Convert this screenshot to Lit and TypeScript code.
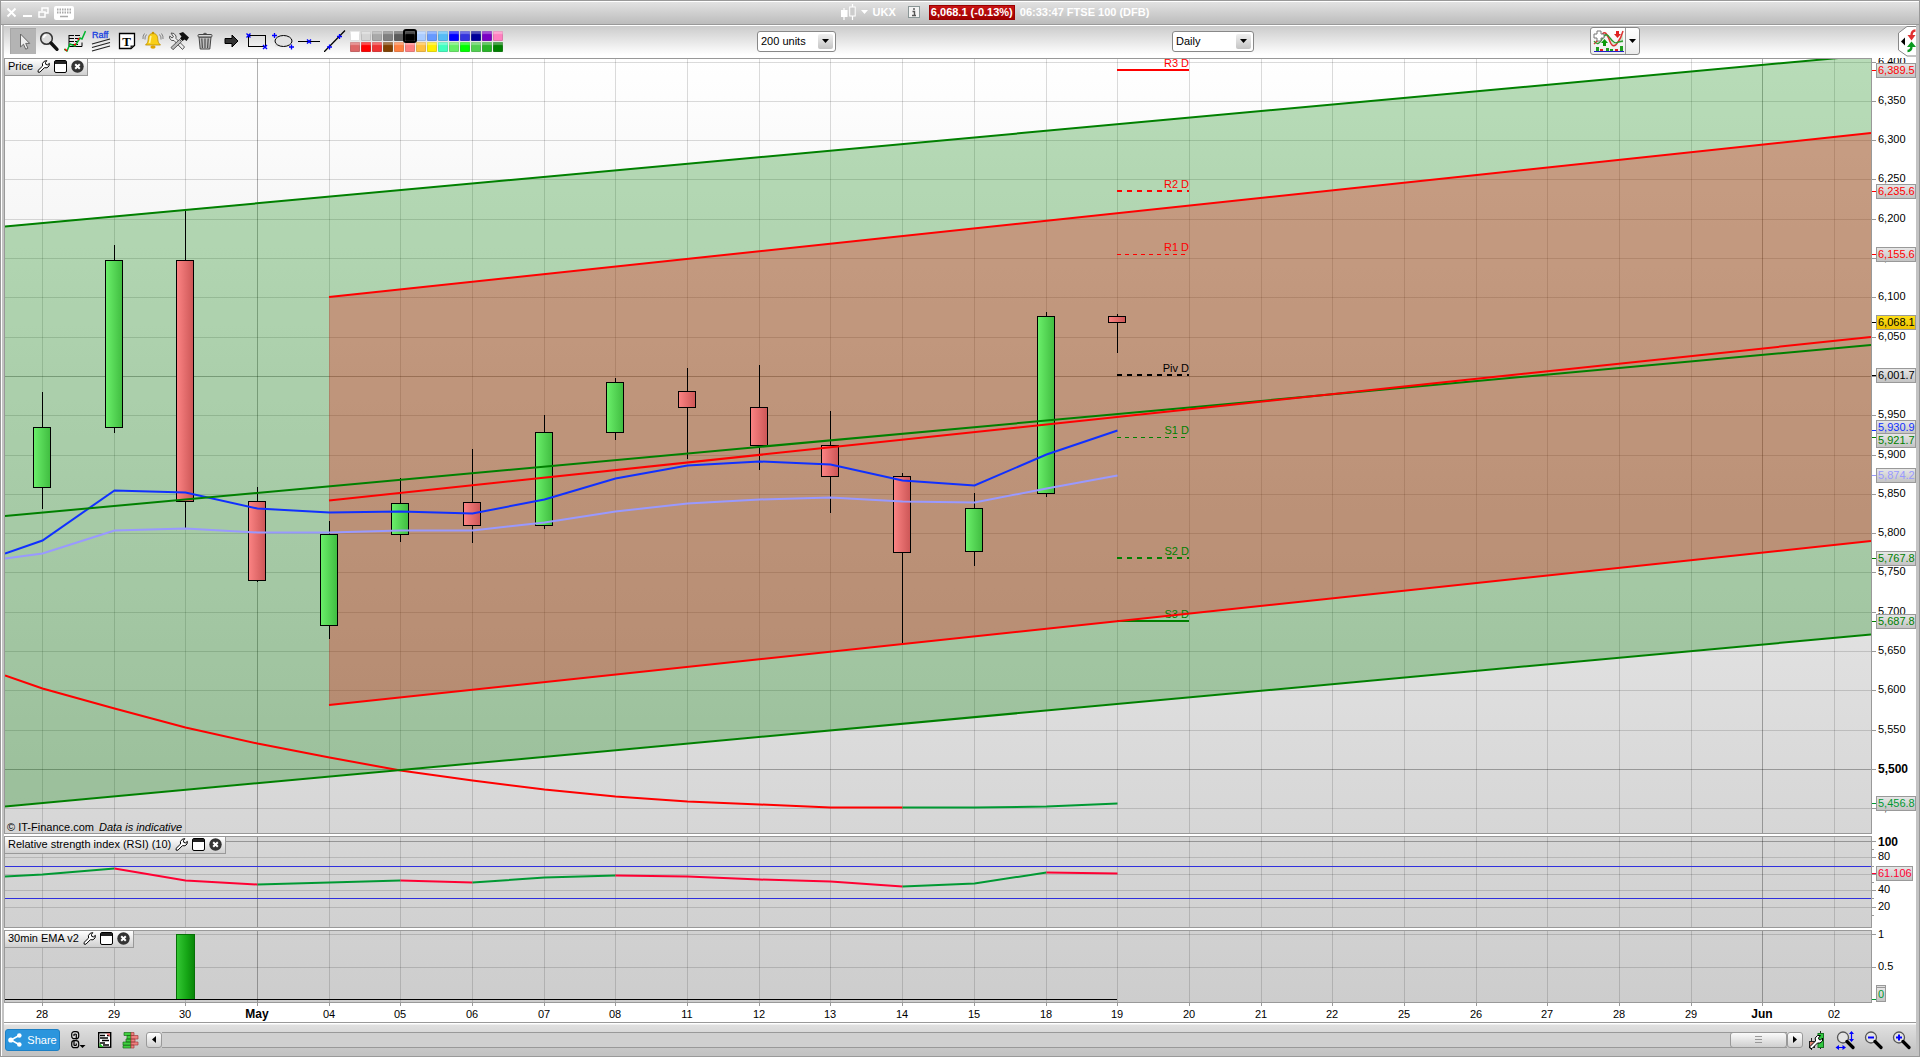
import { LitElement, html, css, svg, nothing } from "lit";
import { customElement, state } from "lit/decorators.js";

/* ---------- Shared data ---------- */

const DAYS = [
  "28", "29", "30", "May", "04", "05", "06", "07", "08", "11", "12", "13", "14",
  "15", "18", "19", "20", "21", "22", "25", "26", "27", "28", "29", "Jun", "02",
];
const isMonth = (d: string) => /[A-Z]/.test(d);

/* Drawing units: the plot spans x 5..1871; each day column is 71.68 units wide. */
const PLOT_LEFT = 5;
const PLOT_SPAN = 1866;
const AXIS_WIDTH = 45;
const colX = (i: number) => 42 + 71.68 * i;

/* open/close body and wick extents: [high, bodyTop, bodyBottom, low, rising] */
const CANDLES: [number, number, number, number, boolean][] = [
  [392, 427, 488, 509, true],
  [245, 260, 428, 433, true],
  [211, 260, 502, 528, false],
  [487, 501, 581, 582, false],
  [521, 534, 626, 639, true],
  [478, 503, 535, 542, true],
  [449, 502, 526, 543, false],
  [415, 432, 526, 529, true],
  [378, 382, 433, 440, true],
  [368, 391, 408, 459, false],
  [365, 407, 446, 470, false],
  [411, 445, 477, 513, false],
  [473, 476, 553, 643, false],
  [493, 508, 552, 566, true],
  [312, 316, 494, 497, true],
  [314, 316, 323, 353, false],
];

/* First value sits on the left edge of the plot, the rest on day columns. */
const FAST_MA = [554, 541, 491, 493, 509, 513, 512, 514, 500, 479, 466, 462, 465, 481, 486, 455, 431];
const SLOW_MA = [559, 554, 531, 529, 533, 533, 531, 531, 523, 512, 504, 500, 498, 502, 503, 489, 476];
const LONG_MA = [676, 689, 709, 728, 744, 758, 771, 781, 790, 797, 802, 805, 808, 808, 808, 807, 804];
const RSI = [877, 875, 869, 881, 885, 883, 881, 883, 878, 876, 877, 880, 882, 887, 884, 873, 874];

type Tag = { text: string; at: number; box?: number; color: string; hot?: boolean };
const PRICE_TAGS: Tag[] = [
  { text: "6,389.5", at: 70, color: "#ff0000" },
  { text: "6,235.6", at: 191, color: "#ff0000" },
  { text: "6,155.6", at: 254, color: "#ff0000" },
  { text: "6,068.1", at: 322, color: "#000000", hot: true },
  { text: "6,001.7", at: 375, color: "#000000" },
  { text: "5,930.9", at: 430, box: 427, color: "#1030ff" },
  { text: "5,921.7", at: 437, box: 440, color: "#008000" },
  { text: "5,874.2", at: 475, color: "#9999ff" },
  { text: "5,767.8", at: 558, color: "#008000" },
  { text: "5,687.8", at: 621, color: "#008000" },
  { text: "5,456.8", at: 803, color: "#009933" },
];

const PIVOTS = [
  { text: "R3 D", at: 70, color: "#ff0000", width: 2, dash: "" },
  { text: "R2 D", at: 191, color: "#ff0000", width: 2, dash: "5 5" },
  { text: "R1 D", at: 254, color: "#ff0000", width: 1, dash: "4 4" },
  { text: "Piv D", at: 375, color: "#000000", width: 2, dash: "5 5" },
  { text: "S1 D", at: 437, color: "#008000", width: 1, dash: "4 4" },
  { text: "S2 D", at: 558, color: "#008000", width: 2, dash: "5 5" },
  { text: "S3 D", at: 621, color: "#008000", width: 2, dash: "" },
];

/* ---------- Base class for plot panels ---------- */

const panelStyles = css`
  :host {
    display: block;
    position: relative;
    min-height: 0;
    overflow: hidden;
    background: #fff;
    font: 11px/14px "Liberation Sans", Arial, sans-serif;
    color: #000;
  }
  .sheet { display: block; width: 100%; height: 100%; }
  .crisp { shape-rendering: crispEdges; }
  .label { font-size: 11px; }
  .label-major { font-size: 12px; font-weight: bold; }
  .frame { fill: none; stroke: #999; }
  .grid { stroke: #000; stroke-opacity: 0.14; }
  .grid-major { stroke: #000; stroke-opacity: 0.3; }
  .tick { stroke: #999; }
  .head {
    position: absolute;
    left: 1px;
    top: 1px;
    display: flex;
    align-items: center;
    gap: 4px;
    height: 14px;
    padding: 0 3px 2px;
    border: solid #999;
    border-width: 0 1px 1px 0;
    background: linear-gradient(#fff, #cfcfcf);
  }
  .head button { display: block; width: 13px; height: 13px; padding: 0; border: 0; background: none; }
  .head svg { display: block; }
`;

abstract class PlotPanel extends LitElement {
  static styles = panelStyles;
  @state() protected w = 1912;
  @state() protected h: number;
  protected abstract heading: string;
  private observer?: ResizeObserver;

  constructor(protected top: number, protected span: number) {
    super();
    this.h = span;
  }

  connectedCallback() {
    super.connectedCallback();
    this.observer = new ResizeObserver(([e]) => {
      this.w = Math.round(e.contentRect.width);
      this.h = Math.round(e.contentRect.height);
    });
    this.observer.observe(this);
  }

  disconnectedCallback() {
    this.observer?.disconnect();
    super.disconnectedCallback();
  }

  protected X(v: number) {
    return 1 + ((v - PLOT_LEFT) * (this.w - AXIS_WIDTH - 1)) / PLOT_SPAN;
  }
  protected Y(v: number) {
    return 1 + ((v - this.top - 1) * (this.h - 2)) / (this.span - 2);
  }
  protected px(i: number) {
    return Math.round(this.X(Math.round(colX(i))));
  }
  protected py(v: number) {
    return Math.round(this.Y(v));
  }
  protected seriesPoint(values: number[], k: number): string {
    const x = k === 0 ? 1 : this.px(k - 1) + 0.5;
    return `${x},${this.Y(values[k]) - 0.5}`;
  }
  protected series(values: number[], from = 0, to = values.length - 1) {
    const out: string[] = [];
    for (let k = from; k <= to; k++) out.push(this.seriesPoint(values, k));
    return out.join(" ");
  }

  protected background(from: string, to: string) {
    const right = this.w - AXIS_WIDTH;
    return svg`
      <defs>
        <linearGradient id="back" x1="0" y1="0" x2="0" y2="1"><stop offset="0" stop-color=${from}/><stop offset="1" stop-color=${to}/></linearGradient>
        <linearGradient id="tag" x1="0" y1="0" x2="0" y2="1"><stop offset="0" stop-color="#e8e8e8"/><stop offset="1" stop-color="#c2c2c2"/></linearGradient>
        <linearGradient id="hot" x1="0" y1="0" x2="0" y2="1"><stop offset="0" stop-color="#ffe018"/><stop offset="1" stop-color="#edc000"/></linearGradient>
        <clipPath id="plot"><rect x="1" y="1" width=${right - 1} height=${this.h - 2}/></clipPath>
      </defs>
      <rect width=${right} height=${this.h} fill="url(#back)"/>`;
  }

  protected columns() {
    return svg`<g class="crisp">${DAYS.map((d, i) => {
      const x = this.px(i) + 0.5;
      return svg`<line class=${isMonth(d) ? "grid-major" : "grid"} x1=${x} x2=${x} y1="1" y2=${this.h - 1}/>`;
    })}</g>`;
  }

  protected row(v: number, major = false) {
    const y = this.py(v) + 0.5;
    const r = this.w - AXIS_WIDTH;
    return svg`
      <line class=${major ? "grid-major crisp" : "grid crisp"} x1="1" x2=${r} y1=${y} y2=${y}/>
      <line class="tick crisp" x1=${r + 1} x2=${r + 5} y1=${y} y2=${y}/>`;
  }

  protected axisText(text: string, v: number, major = false) {
    return svg`<text class=${major ? "label-major" : "label"} x=${this.w - 38} y=${this.py(v) + (major ? 4 : 3)}>${text}</text>`;
  }

  protected tag(t: Tag, width = 39) {
    const y = this.py(t.at);
    const c = this.py(t.box ?? t.at);
    const x = this.w - 40;
    return svg`
      <line class="crisp" x1=${x - 4} x2=${x} y1=${y + 0.5} y2=${y + 0.5} stroke=${t.color}/>
      <rect class="crisp" x=${x + 0.5} y=${c - 6.5} width=${width} height="14" fill=${t.hot ? "url(#hot)" : "url(#tag)"} stroke="#999"/>
      <text class="label" x=${x + 2} y=${c + 4} fill=${t.color}>${t.text}</text>`;
  }

  protected frame() {
    return svg`<rect class="frame crisp" x="0.5" y="0.5" width=${this.w - AXIS_WIDTH} height=${this.h - 1}/>`;
  }

  protected abstract drawing(): unknown;

  render() {
    return html`
      <svg class="sheet" role="img" aria-label=${this.heading}>${this.drawing()}</svg>
      <div class="head">
        <span>${this.heading}</span>
        <button aria-label="Settings">
          <svg width="13" height="13" viewBox="0 0 13 13">
            <path d="M1 10.500 5.600 6 5.400 3.600 7.200 1.300 9.800.6 8.400 2.600 8.800 4.400 10.400 4.900 12.400 3.400 12 6 10 7.800 7.400 7.700 2.900 12.200 1.200 12.200Z" fill="#fff" stroke="#000"/>
          </svg>
        </button>
        <button aria-label="Window">
          <svg width="13" height="13" viewBox="0 0 13 13">
            <rect x=".5" y=".5" width="12" height="12" rx="1.5" fill="#fff" stroke="#000"/>
            <rect x="1" y="1" width="11" height="3" fill="#222"/>
          </svg>
        </button>
        <button aria-label="Close">
          <svg width="13" height="13" viewBox="0 0 13 13">
            <circle cx="6.5" cy="6.5" r="6.2" fill="#333"/>
            <path d="M4.200 4.200l4.600 4.600M8.800 4.200l-4.600 4.600" stroke="#fff" stroke-width="2"/>
          </svg>
        </button>
      </div>`;
  }
}

/* ---------- Price ---------- */

@customElement("price-panel")
export class PricePanel extends PlotPanel {
  protected heading = "Price";
  constructor() { super(58, 776); }

  protected drawing() {
    const levels = Array.from({ length: 20 }, (_, i) => ({
      price: 6400 - 50 * i,
      at: Math.floor(62.11 + 39.29 * i),
    }));
    const l = 1;
    const r = this.w - AXIS_WIDTH;
    const s = this.X(329);
    const Y = (v: number) => this.Y(v);
    const p0 = this.px(15);
    const p1 = this.px(16);
    return svg`
      ${this.background("#ffffff", "#d6d6d6")}
      <defs>
        <linearGradient id="up"><stop offset="0" stop-color="#6bf06b"/><stop offset="1" stop-color="#40bc40"/></linearGradient>
        <linearGradient id="down"><stop offset="0" stop-color="#fc8484"/><stop offset="1" stop-color="#cc5656"/></linearGradient>
      </defs>
      ${this.columns()}
      ${levels.map((v) => this.row(v.at, v.price % 500 === 0))}
      <g clip-path="url(#plot)">
        <polygon points="${l},${Y(226)} ${r},${Y(55)} ${r},${Y(634)} ${l},${Y(806)}" fill="#008000" fill-opacity="0.28"/>
        <polygon points="${s},${Y(297)} ${r},${Y(133)} ${r},${Y(541)} ${s},${Y(705)}" fill="#f40000" fill-opacity="0.28"/>
        ${CANDLES.map(([hi, top, bottom, lo, rising], i) => {
          const x = this.px(i);
          const y0 = this.py(top);
          const y1 = this.py(bottom);
          return svg`<g class="crisp">
            <line x1=${x + 0.5} x2=${x + 0.5} y1=${this.py(hi)} y2=${this.py(lo)} stroke="#000"/>
            <rect x=${x - 8.5} y=${y0 + 0.5} width="17" height=${Math.max(1, y1 - y0 - 1)} fill=${rising ? "url(#up)" : "url(#down)"} stroke="#000"/>
          </g>`;
        })}
        ${PIVOTS.map((p) => {
          const y = this.py(p.at);
          return svg`
            <line class="crisp" x1=${p0} x2=${p1} y1=${p.width === 1 ? y + 0.5 : y} y2=${p.width === 1 ? y + 0.5 : y}
              stroke=${p.color} stroke-width=${p.width} stroke-dasharray=${p.dash || nothing}/>
            <text class="label" x=${p1} y=${y - 3} text-anchor="end" fill=${p.color}>${p.text}</text>`;
        })}
        <g fill="none" stroke-width="2">
          <polyline points=${this.series(LONG_MA, 0, 13)} stroke="#ff0000"/>
          <polyline points=${this.series(LONG_MA, 13)} stroke="#009933"/>
          <polyline points=${this.series(FAST_MA)} stroke="#1030ff"/>
          <polyline points=${this.series(SLOW_MA)} stroke="#9999ff"/>
          <g stroke="#008000">
            <line x1=${l} y1=${Y(226.5)} x2=${r} y2=${Y(55)}/>
            <line x1=${l} y1=${Y(516)} x2=${r} y2=${Y(345)}/>
            <line x1=${l} y1=${Y(806.5)} x2=${r} y2=${Y(634.5)}/>
          </g>
          <g stroke="#ff0000">
            <line x1=${s} y1=${Y(297)} x2=${r} y2=${Y(133)}/>
            <line x1=${s} y1=${Y(500.5)} x2=${r} y2=${Y(337)}/>
            <line x1=${s} y1=${Y(705)} x2=${r} y2=${Y(541)}/>
          </g>
        </g>
      </g>
      <text class="label" x="3" y=${this.h - 3}>© IT-Finance.com<tspan dx="5" font-style="italic">Data is indicative</tspan></text>
      ${this.frame()}
      ${levels.filter((v) => v.price !== 6000).map((v) => this.axisText(v.price.toLocaleString("en-US"), v.at, v.price % 500 === 0))}
      ${PRICE_TAGS.map((t) => this.tag(t))}`;
  }
}

/* ---------- RSI ---------- */

@customElement("rsi-panel")
export class RsiPanel extends PlotPanel {
  protected heading = "Relative strength index (RSI) (10)";
  constructor() { super(836, 92); }

  protected drawing() {
    const r = this.w - AXIS_WIDTH;
    const runs: [number, number, boolean][] = [
      [0, 2, true], [2, 4, false], [4, 6, true], [6, 7, false],
      [7, 9, true], [9, 13, false], [13, 15, true], [15, 16, false],
    ];
    return svg`
      ${this.background("#d6d6d6", "#d1d1d1")}
      ${this.columns()}
      ${[857, 874, 890, 907].map((v) => this.row(v))}
      ${this.row(841, true)}
      <g class="crisp">
        ${[849, 866, 882, 898, 915].map((v) => svg`<line class="tick" x1=${r + 1} x2=${r + 3} y1=${this.py(v) + 0.5} y2=${this.py(v) + 0.5}/>`)}
        ${[866, 898].map((v) => svg`<line x1="1" x2=${r} y1=${this.py(v) + 0.5} y2=${this.py(v) + 0.5} stroke="#3030dd"/>`)}
      </g>
      <g fill="none" stroke-width="2" clip-path="url(#plot)">
        ${runs.map(([a, b, up]) => svg`<polyline points=${this.series(RSI, a, b)} stroke=${up ? "#009933" : "#ff0033"}/>`)}
      </g>
      ${this.frame()}
      ${this.axisText("100", 842, true)}
      ${this.axisText("80", 857)}
      ${this.axisText("40", 890)}
      ${this.axisText("20", 907)}
      ${this.tag({ text: "61.106", at: 873, color: "#ff0033" }, 36)}`;
  }
}

/* ---------- EMA signal ---------- */

@customElement("ema-panel")
export class EmaPanel extends PlotPanel {
  protected heading = "30min EMA v2";
  constructor() { super(930, 73); }

  protected drawing() {
    const x = this.px(2);
    const top = this.py(934);
    const zero = this.py(999);
    const tagX = this.w - 40;
    return svg`
      ${this.background("#d1d1d1", "#cdcdcd")}
      <defs><linearGradient id="bar"><stop offset="0" stop-color="#36c836"/><stop offset="0.55" stop-color="#17a817"/><stop offset="1" stop-color="#088508"/></linearGradient></defs>
      ${this.columns()}
      ${this.row(934)}
      ${this.row(967)}
      <g class="crisp">
        <rect x=${x - 8.5} y=${top + 0.5} width="18" height=${zero - top} fill="url(#bar)" stroke="#067006"/>
        <line x1="1" x2=${this.px(15)} y1=${zero + 0.5} y2=${zero + 0.5} stroke="#000"/>
      </g>
      ${this.frame()}
      ${this.axisText("1", 935)}
      ${this.axisText("0.5", 967)}
      <g class="crisp">
        <line x1=${tagX - 4} x2=${tagX} y1=${zero + 0.5} y2=${zero + 0.5} stroke="#009933"/>
        <rect x=${tagX + 0.5} y=${zero - 13.5} width="9" height="15" fill="#e0e0e0" stroke="#999"/>
        <rect x=${tagX + 0.5} y=${zero - 11.5} width="9" height="14" fill="url(#tag)" stroke="#999"/>
      </g>
      <text class="label" x=${tagX + 2} y=${zero - 1} fill="#009933">0</text>`;
  }
}

/* ---------- Date axis ---------- */

@customElement("date-axis")
export class DateAxis extends PlotPanel {
  protected heading = "Dates";
  constructor() { super(1003, 19); }
  protected drawing() { return nothing; }
  render() {
    return html`<svg class="sheet" role="img" aria-label="Dates">${DAYS.map((d, i) => {
      const x = this.px(i);
      return svg`
        <line class="tick crisp" x1=${x + 0.5} x2=${x + 0.5} y1="0" y2="3"/>
        <text class=${isMonth(d) ? "label-major" : "label"} x=${x} y="15" text-anchor="middle">${d}</text>`;
    })}</svg>`;
  }
}

/* ---------- Icons ---------- */

const icon = (w: number, h: number, body: unknown) =>
  html`<svg width=${w} height=${h} viewBox="0 0 ${w} ${h}" aria-hidden="true">${body}</svg>`;

const lens = (x: number, y: number, sign: unknown = nothing) => svg`
  <circle cx=${x} cy=${y} r="5.5" fill="#e4e4e4" stroke="#555" stroke-width="1.3"/>
  ${sign}
  <path d="M${x + 4} ${y + 4}l6 6" stroke="#000" stroke-width="3.2" stroke-linecap="round"/>`;

const cross = (x: number, y: number) =>
  svg`<path d="M${x - 2} ${y - 2}l4 4m0-4l-4 4" stroke="#00f" stroke-width="1.4" fill="none"/>`;

const TOOLS: { name: string; art: unknown }[] = [
  { name: "Pointer", art: icon(22, 22, svg`<path d="M7.500 3v13l3-2.800 2.200 5 2.200-1-2.200-4.800h4z" fill="#eee" stroke="#666"/>`) },
  {
    name: "Zoom",
    art: icon(22, 22, svg`
      <circle cx="8.5" cy="8.5" r="5.8" fill="#dcdcdc" stroke="#333" stroke-width="1.5"/>
      <path d="M5.500 8a3.400 3.400 0 0 1 3-3" stroke="#fff" stroke-width="1.5" fill="none"/>
      <path d="M13 13l6 6.300" stroke="#111" stroke-width="3.4" stroke-linecap="round"/>`),
  },
  {
    name: "Indicator report",
    art: icon(22, 22, svg`
      <path d="M5 5.500h12M5 8.500h12M5 11.500h9M5 14.500h9" stroke="#000" stroke-dasharray="5 1"/>
      <path d="M5 5v11.500h13v-4" fill="none" stroke="#000"/>
      <path d="M0 19l3 2 3-7 5 2 5-8 2 1 3.500-8" fill="none" stroke="#00b52c" stroke-width="1.5"/>
      <path d="M1 19l2 2M10 15l2-1M14 10l1-2" stroke="#f00" stroke-width="1.5"/>`),
  },
  {
    name: "Raff channel",
    art: icon(22, 22, svg`
      <text x="2" y="8" font-family="Liberation Sans, Arial, sans-serif" font-size="9" fill="#1540e0" stroke="#1540e0" stroke-width=".3">Raff</text>
      <path d="M2 14l18-5M2 17.500l18-5M2 21l18-5" stroke="#222" stroke-width="1.2"/>`),
  },
  {
    name: "Text",
    art: icon(22, 22, svg`
      <path d="M3.500 3.500h15v12l-3.500 3h-11.500z" fill="#fff" stroke="#000" stroke-width="1.3"/>
      <path d="M18 15.500h-3.500v3z" fill="#222"/>
      <text x="10.5" y="15.5" text-anchor="middle" font-family="Liberation Serif, serif" font-weight="bold" font-size="13">T</text>`),
  },
  {
    name: "Alert",
    art: icon(22, 22, svg`
      <path d="M11 3.500c-4 0-4.600 3-4.800 6-.2 2.500-1 4-2.700 5.500h15c-1.700-1.500-2.500-3-2.700-5.500-.2-3-.8-6-4.800-6z" fill="#f9cf17" stroke="#b98a00" stroke-width=".8"/>
      <path d="M9 6c-.9 2-.8 5-1.500 7" stroke="#fff3a0" stroke-width="1.6" fill="none"/>
      <ellipse cx="11" cy="17" rx="2.6" ry="1.8" fill="#e0a400"/><circle cx="11" cy="3" r="1.3" fill="#c99500"/>
      <path d="M4.500 4.500q-2 2.200-1.500 5M2.500 3.500q-2 2.500-1.500 5.500M17.500 4.500q2 2.200 1.500 5M19.500 3.500q2 2.500 1.500 5.500" stroke="#777" fill="none" stroke-width=".9"/>`),
  },
  {
    name: "Tools",
    art: icon(22, 22, svg`
      <path d="M3 3l3 .5 2 2.500v2.500l8.500 8.500-2 2.500-8.500-9h-2.500l-2-2.500.3-2 2.200 2 1.500-1.200z" fill="#eee" stroke="#555"/>
      <path d="M11.500 9.500l-8.500 8 2 2.200 8.500-8z" fill="#bbb" stroke="#555"/>
      <path d="M11 3.500l4-1.500 6 5.500-2.500 3.500-2-1.500-2 1.500-2.500-2.500 1.500-2z" fill="#111"/>`),
  },
  {
    name: "Delete",
    art: icon(22, 22, svg`
      <path d="M5 7h12l-1.200 12h-9.600z" fill="#bdbdbd" stroke="#444"/>
      <path d="M7.800 8.500l.6 9.500M11 8.500v9.500M14.200 8.500l-.6 9.500" stroke="#444" stroke-width="1.1"/>
      <rect x="4" y="4.5" width="14" height="2.5" rx="1" fill="#d8d8d8" stroke="#444"/>
      <path d="M9 4.300q2-2.500 4 0" fill="none" stroke="#444"/>`),
  },
  { name: "Arrow", art: icon(22, 22, svg`<path d="M5 8.500h7v-3.500l6 6-6 6v-3.500h-7z" fill="#333" stroke="#000"/>`) },
  {
    name: "Rectangle",
    art: icon(22, 22, svg`<rect x="2.5" y="5.5" width="17" height="11" fill="none" stroke="#000"/>${cross(2.5, 5.5)}${cross(19, 17)}`),
  },
  {
    name: "Ellipse",
    art: icon(22, 22, svg`
      <rect x="3" y="5.5" width="17" height="11" fill="#e2e2e2"/>
      <ellipse cx="11.5" cy="11" rx="8.5" ry="5.5" fill="none" stroke="#000"/>
      <path d="M0 5.500h5M2.500 3v5M17 17h5M19.500 14.500v5" stroke="#00f" stroke-width="1.3"/>`),
  },
  { name: "Horizontal line", art: icon(22, 22, svg`<path d="M0 11.500h22" stroke="#000"/>${cross(11, 11.5)}`) },
  {
    name: "Line",
    art: icon(22, 22, svg`<path d="M0 22L21 .5" stroke="#000" stroke-width="1.3"/>
      <path d="M3 17h5M5.500 14.500v5M13 6.500h5M15.500 4v5" stroke="#00f" stroke-width="1.3"/>`),
  },
];

const SWATCHES = [
  "#ffffff", "#d4d4d4", "#a9a9a9", "#808080", "#5c5c5c", "#000000", "#aaccff", "#6699ff", "#55bbf5", "#0000ff", "#3333dd", "#000099", "#7a00c4", "#ff80c0",
  "#dd6666", "#ff0000", "#ee3333", "#804000", "#ff8040", "#ff8080", "#ffc040", "#ffee00", "#40ffc0", "#66ee66", "#00ff00", "#50d050", "#28b428", "#008000",
];

/* ---------- Application window ---------- */

@customElement("app-root")
export class AppRoot extends LitElement {
  static styles = css`
    :host {
      display: block;
      height: 100vh;
      font: 11px/14px "Liberation Sans", Arial, sans-serif;
      color: #000;
    }
    * { box-sizing: border-box; }
    button, select, input { font: inherit; color: inherit; margin: 0; }
    button { padding: 0; border: 0; background: none; display: flex; align-items: center; justify-content: center; }
    svg { display: block; flex: none; }
    .window { height: 100%; display: flex; flex-direction: column; border: 1px solid #999; background: #c3c3c3; }
    .title {
      height: 24px;
      flex: none;
      display: flex;
      align-items: center;
      padding: 0 3px 1px 5px;
      border-top: 1px solid #fff;
      border-bottom: 1px solid #999;
      background: linear-gradient(#e2e2e2, #bcbcbc);
      color: #fff;
      font-weight: bold;
    }
    .controls { display: flex; align-items: center; gap: 5px; }
    .instrument { display: flex; align-items: center; margin: 0 auto; padding-bottom: 1px; }
    .symbol { display: flex; align-items: center; gap: 5px; color: #fff; font-weight: bold; }
    .info { margin: 0 9px 0 12px; }
    .quote { padding: 0 1px; border: 1px solid #900; background: linear-gradient(#c81414, #a00000); line-height: 13px; white-space: nowrap; }
    .clock { margin-left: 5px; white-space: nowrap; }
    .body { flex: 1; min-height: 0; display: flex; flex-direction: column; padding: 0 3px 3px 2px; border-left: 1px solid #fff; }
    .toolbar {
      height: 33px;
      flex: none;
      display: flex;
      align-items: center;
      border-top: 1px solid #fff;
      padding: 0 0 2px 6px;
      background: linear-gradient(#cbcbcb, #fff 90%);
    }
    .tool { width: 26px; height: 26px; flex: none; }
    .tool-on { background: #b4b4b4; border: solid #a6a6a6; border-width: 1px 0 0 1px; }
    .swatches { display: grid; grid-template-columns: repeat(14, 10px); gap: 1px; margin-left: 2px; }
    .swatch { width: 10px; height: 10px; border-radius: 1px; box-shadow: inset 0 3px 1px rgba(255, 255, 255, 0.3), inset 0 0 0 1px rgba(90, 90, 90, 0.2); }
    .swatch-on { outline: 2px solid #000; position: relative; z-index: 1; }
    .space-start { flex: 254 0 0; }
    .space-inner { flex: 336 0 0; }
    .space-end { flex: 258 0 0; }
    .picker { display: grid; flex: none; }
    .picker > * { grid-area: 1 / 1; }
    .picker select {
      appearance: none;
      height: 21px;
      padding: 0 22px 0 3px;
      border: 1px solid #888;
      border-radius: 3px;
      background: #fff;
    }
    .picker-units { width: 79px; }
    .picker-period { width: 82px; }
    .knob {
      justify-self: end;
      align-self: center;
      width: 15px;
      height: 15px;
      margin-right: 3px;
      border-radius: 2px;
      background: linear-gradient(#f0f0f0, #c4c4c4);
      pointer-events: none;
      display: grid;
      place-items: center;
    }
    .split { display: flex; height: 28px; border: 1px solid #888; border-radius: 3px; background: linear-gradient(#fff, #ececec); }
    .split-main { width: 35px; border-right: 1px solid #999; }
    .split-more { width: 13px; }
    .flap { width: 18px; height: 31px; flex: none; }
    .charts { flex: 1; min-height: 0; display: flex; flex-direction: column; background: #fff; }
    price-panel { flex: 776 0 0; margin-bottom: 2px; }
    rsi-panel { flex: 92 0 0; margin-bottom: 2px; }
    ema-panel { flex: 73 0 0; }
    date-axis { flex: none; height: 19px; }
    .bottom {
      height: 31px;
      flex: none;
      display: flex;
      align-items: center;
      border-top: 1px solid #999;
      padding: 3px 5px 0 1px;
      background: linear-gradient(#fff 1px, #e0e0e0 2px, #c3c3c3);
    }
    .share { width: 55px; height: 22px; gap: 5px; border: 1px solid #1c7fc4; border-radius: 3px; background: #2b95dd; color: #fff; }
    .bottom-tools { display: flex; gap: 9px; margin: 0 7px 0 10px; }
    .bottom-tool { width: 17px; height: 18px; }
    .step { width: 16px; height: 16px; border: 1px solid #999; border-radius: 3px; background: linear-gradient(#fff, #d0d0d0); }
    .scroll {
      appearance: none;
      flex: 1;
      min-width: 0;
      height: 16px;
      border: solid #999;
      border-width: 1px 0;
      background: #d0d0d0;
    }
    .scroll::-webkit-slider-thumb {
      appearance: none;
      width: 57px;
      height: 16px;
      border: 1px solid #999;
      border-radius: 3px;
      background:
        repeating-linear-gradient(#999 0 1px, transparent 1px 3px) center / 7px 7px no-repeat,
        linear-gradient(#fafafa, #cfcfcf);
    }
    .views { display: flex; gap: 8px; margin-left: 4px; }
    .view { width: 20px; height: 20px; }
  `;

  private picker(id: string, label: string, options: string[]) {
    return html`
      <div class="picker picker-${id}">
        <select aria-label=${label}>${options.map((o) => html`<option>${o}</option>`)}</select>
        <span class="knob">${icon(7, 4, svg`<path d="M0 0h7L3.500 4z"/>`)}</span>
      </div>`;
  }

  render() {
    return html`
      <div class="window">
        <header class="title">
          <div class="controls">
            <button aria-label="Close">${icon(11, 11, svg`<path d="M1.500 1.500l8 8m0-8l-8 8" stroke="#fff" stroke-width="2"/>`)}</button>
            <button aria-label="Minimise">${icon(11, 11, svg`<path d="M1 9h9" stroke="#fff" stroke-width="2"/>`)}</button>
            <button aria-label="Restore">${icon(11, 11, svg`<path d="M4 4v-3h6v5h-3M1 5h6v5h-6z" fill="none" stroke="#fff" stroke-width="1.5"/>`)}</button>
            <button aria-label="Keyboard">
              ${icon(20, 14, svg`<rect width="20" height="14" rx="2" fill="#fff"/>
                <path d="M3 3.500h14M3 6.500h14" stroke="#aaa" stroke-width="2" stroke-dasharray="1.5 1"/><path d="M6 10.500h8" stroke="#aaa" stroke-width="1.5"/>`)}
            </button>
          </div>
          <div class="instrument">
            <button class="symbol" aria-label="UKX instrument">
              ${icon(15, 16, svg`<path d="M3 4v12M11.500 0v16" stroke="#fff" stroke-width="1.2"/><rect y="6" width="6.5" height="7" fill="#fff"/><rect x="8.7" y="3" width="5.5" height="9" fill="#ccc" stroke="#fff"/>`)}
              ${icon(7, 4, svg`<path d="M0 0h7L3.500 4z" fill="#fff"/>`)}
              UKX
            </button>
            <button class="info" aria-label="Information">
              ${icon(12, 12, svg`<rect x=".5" y=".5" width="11" height="11" fill="#f4f4f4" stroke="#8a9696"/><path d="M6 2v2M4.500 5.500h2v4M4 9.500h4" fill="none" stroke="#555" stroke-width="1.4"/>`)}
            </button>
            <span class="quote">6,068.1 (-0.13%)</span>
            <span class="clock">06:33:47 FTSE 100 (DFB)</span>
          </div>
        </header>
        <div class="body">
          <div class="toolbar">
            ${TOOLS.map((t, i) => html`<button class="tool ${i === 0 ? "tool-on" : ""}" aria-label=${t.name}>${t.art}</button>`)}
            <div class="swatches">
              ${SWATCHES.map((c, i) => html`<button class="swatch ${i === 5 ? "swatch-on" : ""}" aria-label="Colour ${c}" style="background-color:${c}"></button>`)}
            </div>
            <span class="space-start"></span>
            ${this.picker("units", "Units", ["200 units", "500 units"])}
            <span class="space-inner"></span>
            ${this.picker("period", "Period", ["Daily", "Weekly"])}
            <span class="space-inner"></span>
            <div class="split">
              <button class="split-main" aria-label="Add indicator">
                ${icon(31, 22, svg`
                  <path d="M1 13Q7 12 11 4Q14 2 18 9Q22 20 30 2V13Q24 12 20 16Q17 8 13 6Q9 12 1 14Z" fill="#cfe8cf"/>
                  <path d="M1 14Q6 10 9 5Q12-1 16 9Q20 21 25 12Q28 8 30 1" fill="none" stroke="#d33" stroke-width="1.5"/>
                  <path d="M1 11Q5 17 9 9Q13 1 17 8Q22 15 25 12L30 11" fill="none" stroke="#2a9a2a" stroke-width="1.3"/>
                  <path d="M4 1h4v3h3v4h-3v3h-4v-3h-3v-4h3z" fill="#fff" stroke="#777"/>
                  <path d="M23 1h3v3h2l-3.500 4-3.500-4h2z" fill="#e02020"/>
                  <path d="M10 16v-3h-2l3.500-4 3.500 4h-2v3z" fill="#0a9a0a"/>
                  <path d="M3 21v-4h3v4zM13 21v-3h3v3zM17 21v-2h3v2zM27 21v-5h3v5z" fill="#1ea01e"/>
                  <path d="M7 21v-2h3v2zM22 21v-2h3v2z" fill="#e02020"/>
                  <path d="M1 21.500h30" stroke="#22c"/>`)}
              </button>
              <button class="split-more" aria-label="More indicators">${icon(7, 4, svg`<path d="M0 0h7L3.500 4z"/>`)}</button>
            </div>
            <span class="space-end"></span>
            <button class="flap" aria-label="Open trading panel">
              ${icon(18, 31, svg`
                <path d="M18 .5H9L.5 7v17l8.500 6h9" fill="#fff" stroke="#888"/>
                <path d="M7 11.500v8l-4-4z"/>
                <path d="M17.500 4.500q-4 0-4 5" fill="none" stroke="#e03030" stroke-width="2.4"/><path d="M9.500 9h8l-4 5.500z" fill="#e03030"/>
                <path d="M9.500 25q4 0 4-5" fill="none" stroke="#0a9a20" stroke-width="2.4"/><path d="M9 21h9l-4.500-5.500z" fill="#0a9a20"/>`)}
            </button>
          </div>
          <main class="charts">
            <price-panel></price-panel>
            <rsi-panel></rsi-panel>
            <ema-panel></ema-panel>
            <date-axis></date-axis>
          </main>
          <footer class="bottom">
            <button class="share">
              ${icon(14, 14, svg`<path d="M11 2.500L3 7l8 4.500" fill="none" stroke="#fff" stroke-width="1.5"/><circle cx="11.3" cy="2.5" r="2.3" fill="#fff"/><circle cx="2.8" cy="7" r="2.6" fill="#fff"/><circle cx="11.3" cy="11.5" r="2.3" fill="#fff"/>`)}
              Share
            </button>
            <div class="bottom-tools">
              <button class="bottom-tool" aria-label="Link windows">
                ${icon(17, 18, svg`
                  <rect x="1.7" y=".7" width="7" height="7" rx="2.5" fill="none" stroke="#000" stroke-width="1.2"/>
                  <path d="M4 5v-1.500q1.200-1 2.300 0v5" fill="none" stroke="#000" stroke-width="1.2"/>
                  <rect x="1.7" y="9.7" width="7" height="7" rx="2.5" fill="none" stroke="#000" stroke-width="1.2"/>
                  <path d="M4 9v5q1.200 1 2.300 0v-1.500" fill="none" stroke="#000" stroke-width="1.2"/>
                  <path d="M9.500 14h6l-3 3z"/>`)}
              </button>
              <button class="bottom-tool" aria-label="Order list">
                ${icon(17, 18, svg`
                  <rect x="2.7" y="1.7" width="12" height="14.5" fill="#fff" stroke="#000" stroke-width="1.4"/>
                  <path d="M4 4.500h5M11 4.500h3M4 7h8M6 9.500h7M4 12h5M7 14h6" stroke="#000" stroke-width="1.3"/>
                  <path d="M10 2.500h4v3z" fill="#e66"/><path d="M3.500 16v-4l4 4z" fill="#2b2"/>`)}
              </button>
              <button class="bottom-tool" aria-label="Order book">
                ${icon(17, 18, svg`
                  <path d="M2 1.500h7v3h-7zM4 8h5v3h-5zM1 11h8v3h-8zM5 4.500h4v3.500h-4zM1 14.500h8v2.500h-8z" fill="#40d040" stroke="#1a701a" stroke-width=".7"/>
                  <path d="M9 1.500h3v3h-3zM9 4.500h7v3.500h-7zM9 8h4v3h-4zM9 11h7v3h-7zM9 14h3v3h-3z" fill="#f08080" stroke="#a04040" stroke-width=".7"/>`)}
              </button>
            </div>
            <button class="step" aria-label="Scroll left">${icon(4, 7, svg`<path d="M4 0v7L0 3.500z"/>`)}</button>
            <input class="scroll" type="range" min="0" max="100" value="100" aria-label="Scroll history" />
            <button class="step" aria-label="Scroll right">${icon(4, 7, svg`<path d="M0 0v7L4 3.500z"/>`)}</button>
            <div class="views">
              <button class="view" aria-label="Chart settings">
                ${icon(20, 20, svg`
                  <path d="M4.500 8v12M13.500 1v18" stroke="#222"/>
                  <rect x="2.5" y="11.5" width="5" height="6" fill="#e08070" stroke="#222"/>
                  <rect x="11" y="3.5" width="5.5" height="14" fill="#30c840" stroke="#187020"/>
                  <path d="M3 16.500L8.500 11l-.3-3 2.300-2.500h3l-2 2.500.5 1.500 1.500.5 2-2v3L13 13h-2.500L5 18.500H3.200z" fill="#fff" stroke="#000"/>`)}
              </button>
              <button class="view" aria-label="Fit to window">
                ${icon(20, 20, svg`${lens(8, 7.5)}
                  <path d="M16.500 2v9M3 17.500h7" stroke="#00f" stroke-width="1.2"/>
                  <path d="M14 4l2.500-3 2.500 3zM14 9l2.500 3 2.500-3zM4 15l-3.500 2.500L4 20zM7.500 15l3.500 2.500L7.500 20z" fill="#00f"/>`)}
              </button>
              <button class="view" aria-label="Zoom out">
                ${icon(20, 20, lens(8, 7.5, svg`<path d="M5 7.500h6" stroke="#00f" stroke-width="2"/>`))}
              </button>
              <button class="view" aria-label="Zoom in">
                ${icon(20, 20, lens(8, 7.5, svg`<path d="M5 7.500h6M8 4.500v6" stroke="#00f" stroke-width="2"/>`))}
              </button>
            </div>
          </footer>
        </div>
      </div>`;
  }
}
